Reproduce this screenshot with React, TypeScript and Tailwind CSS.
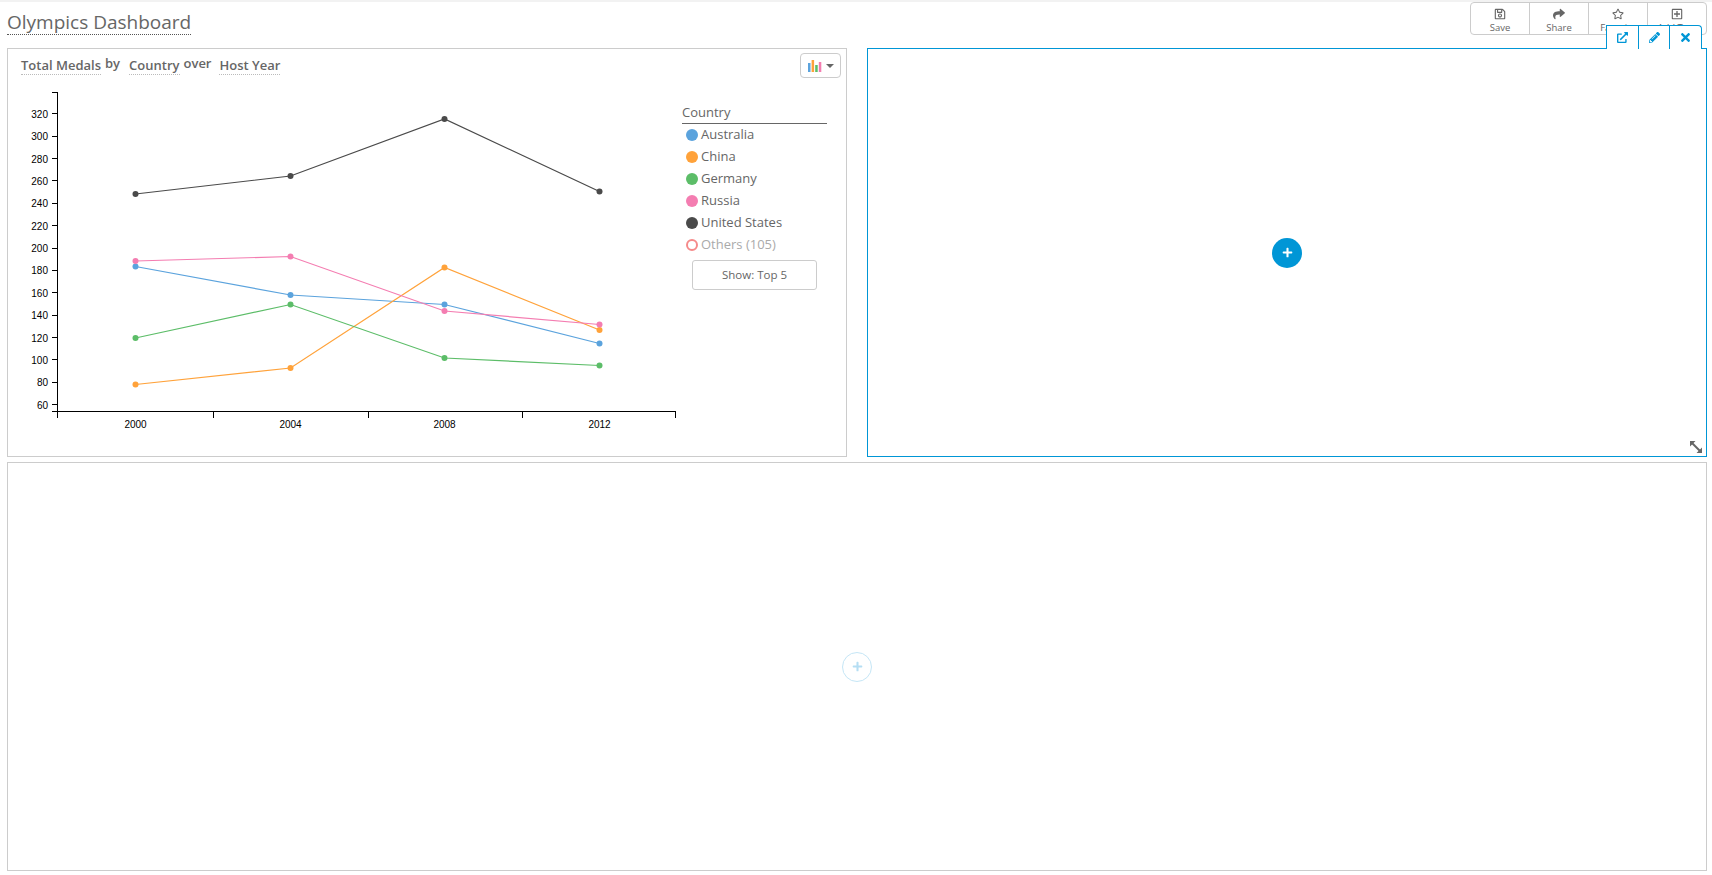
import { FaExternalLinkAlt, FaPencilAlt, FaPlus, FaRegPlusSquare, FaRegSave, FaRegStar, FaShare, FaTimes } from 'react-icons/fa'

const font = "font-['Open_Sans',sans-serif]"

const toolbar = [
  { label: 'Save', icon: FaRegSave },
  { label: 'Share', icon: FaShare },
  { label: 'Favorite', icon: FaRegStar },
  { label: 'Add Text', icon: FaRegPlusSquare },
]

const years = [
  { label: '2000', x: 135.5 },
  { label: '2004', x: 290.5 },
  { label: '2008', x: 444.5 },
  { label: '2012', x: 599.5 },
]

const series = [
  { name: 'Australia', color: '#5ba3dd', ys: [266.5, 295, 304.5, 343.5] },
  { name: 'China', color: '#ffa23a', ys: [384.5, 368, 267.5, 330] },
  { name: 'Germany', color: '#5cbd68', ys: [338, 304.5, 358, 365.5] },
  { name: 'Russia', color: '#f47db1', ys: [261, 256.5, 311, 324.5] },
  { name: 'United States', color: '#4a4a4a', ys: [194, 176, 119, 191.5] },
]

const yTicks = [320, 300, 280, 260, 240, 220, 200, 180, 160, 140, 120, 100, 80, 60]

function LineChart() {
  return (
    <svg width="680" height="360" viewBox="0 80 680 360" className="block shrink-0">
      <g stroke="#000" strokeWidth="1" fill="none" shapeRendering="crispEdges">
        <path d="M52 92.5H57.5V411.5M52 411.5H675.5" />
        {[57.5, 213.5, 368.5, 522.5, 675.5].map((x) => (
          <path key={x} d={`M${x} 411.5V418`} />
        ))}
        {yTicks.map((t) => (
          <path key={t} d={`M52 ${Math.round(113.3 + (320 - t) * 1.119) + 0.5}H57.5`} />
        ))}
      </g>
      <g fontFamily="'Liberation Sans', sans-serif" fontSize="10" fill="#000">
        {yTicks.map((t) => (
          <text key={t} x="48" y={113.3 + (320 - t) * 1.119 + 4.5} textAnchor="end">
            {t}
          </text>
        ))}
        {years.map((y) => (
          <text key={y.label} x={y.x} y="428" textAnchor="middle">
            {y.label}
          </text>
        ))}
      </g>
      {series.map((s) => (
        <g key={s.name}>
          <polyline
            points={s.ys.map((y, i) => `${years[i].x},${y}`).join(' ')}
            fill="none"
            stroke={s.color}
            strokeWidth="1.2"
          />
          {s.ys.map((y, i) => (
            <circle key={i} cx={years[i].x} cy={y} r="3" fill={s.color} />
          ))}
        </g>
      ))}
    </svg>
  )
}

function ChartIcon() {
  return (
    <svg width="14" height="12" viewBox="0 0 14 12">
      <rect x="0" y="3" width="2.5" height="9" fill="#5ba3dd" />
      <rect x="3.6" y="0" width="2.5" height="12" fill="#ffa23a" />
      <rect x="7.2" y="5" width="2.5" height="7" fill="#5cbd68" />
      <rect x="10.8" y="2" width="2.5" height="10" fill="#f47db1" />
    </svg>
  )
}

function Field({ children }: { children: string }) {
  return <span className="border-b border-dotted border-[#bbb] pb-0 leading-[18px] font-semibold">{children}</span>
}

function Legend() {
  return (
    <div className="w-[145px] ml-[2px] mt-[23px] text-[#666]">
      <div className="h-[21px] border-b border-[#666] text-[13px] leading-[19px]">Country</div>
      <ul className="pl-[4px] text-[13px]">
        {series.map((s) => (
          <li key={s.name} className="h-[22px] flex items-center gap-[3px]">
            <svg width="12" height="12" viewBox="0 0 12 12" className="shrink-0">
              <circle cx="6" cy="6" r="6" fill={s.color} />
            </svg>
            <span className="whitespace-nowrap">{s.name}</span>
          </li>
        ))}
        <li className="h-[22px] flex items-center gap-[3px] text-[#aaa]">
          <span className="w-3 h-3 rounded-full border-2 border-[#f58a8a] shrink-0" />
          <span className="whitespace-nowrap">Others (105)</span>
        </li>
      </ul>
      <button className="mt-[4px] ml-[10px] w-[125px] h-[30px] border border-[#ccc] rounded-[3px] bg-white text-[11.5px] text-[#666]">
        Show: Top 5
      </button>
    </div>
  )
}

function AddButton({ faded }: { faded?: boolean }) {
  return faded ? (
    <div className="w-[30px] h-[30px] rounded-full border border-[#c5e6f6] flex items-center justify-center text-[#b5def3]">
      <FaPlus size={11} />
    </div>
  ) : (
    <div className="w-[30px] h-[30px] rounded-full bg-[#0096d6] flex items-center justify-center text-white">
      <FaPlus size={11} />
    </div>
  )
}

export default function App() {
  return (
    <div className={`${font} w-[1712px] h-[875px] bg-white overflow-hidden border-t-2 border-[#f2f2f2] px-[7px] text-[#666]`}>
      {/* Header */}
      <header className="h-[46px] flex justify-between items-start">
        <h1 className="mt-[8px] text-[19px] leading-[24px] font-normal border-b border-dotted border-[#555]">Olympics Dashboard</h1>
        <div className="flex w-[237px] h-[33px] -mr-[2px] border border-[#ccc] rounded-[4px]">
          {toolbar.map(({ label, icon: Icon }, i) => (
            <div key={label} className={`flex-1 flex flex-col items-center pt-[5px] ${i ? 'border-l border-[#ccc]' : ''}`}>
              <Icon size={12} className="text-[#666]" />
              <span className="text-[9.5px] leading-[13px] mt-[1px] whitespace-nowrap">{label}</span>
            </div>
          ))}
        </div>
      </header>

      <div className="grid grid-cols-[840px_840px] gap-x-[20px] gap-y-[5px] grid-rows-[409px_409px] w-[1700px]">
        {/* Chart panel */}
        <section className="relative border border-[#ccc]">
          <div className="flex items-start h-[33px] pl-[13px] pt-[7px] text-[13px]">
            <Field>Total Medals</Field>
            <span className="ml-[4px] mr-[9px] -mt-[2px] font-semibold">by</span>
            <Field>Country</Field>
            <span className="ml-[4px] mr-[8px] -mt-[2px] font-semibold">over</span>
            <Field>Host Year</Field>
          </div>
          <div className="absolute right-[5px] top-[4px] w-[41px] h-[25px] border border-[#ccc] rounded-[4px] flex items-center justify-center gap-[4px] bg-white">
            <ChartIcon />
            <span className="w-0 h-0 border-x-[4px] border-x-transparent border-t-[4px] border-t-[#666]" />
          </div>
          <div className="flex -ml-[8px] -mt-[2px]">
            <LineChart />
            <Legend />
          </div>
        </section>

        {/* Empty selected panel */}
        <section className="relative border border-[#0096d6] flex items-center justify-center">
          <AddButton />
          <div className="absolute -top-[24px] right-[4px] flex h-[24px] w-[96px] bg-white border border-[#0096d6] border-b-0 rounded-tr-[4px] text-[#0096d6]">
            <div className="flex-1 flex items-center justify-center">
              <FaExternalLinkAlt size={11} />
            </div>
            <div className="flex-1 flex items-center justify-center border-l border-[#0096d6]">
              <FaPencilAlt size={11} />
            </div>
            <div className="flex-1 flex items-center justify-center border-l border-[#0096d6]">
              <FaTimes size={13} />
            </div>
          </div>
          <svg width="14" height="14" viewBox="0 0 14 14" className="absolute right-[3px] bottom-[2px]">
            <path d="M3 3L11 11" stroke="#666" strokeWidth="2" />
            <path d="M1 1H6.5L1 6.5ZM13 13H7.5L13 7.5Z" fill="#666" />
          </svg>
        </section>

        {/* Empty panel */}
        <section className="col-span-2 border border-[#ccc] flex items-center justify-center">
          <AddButton faded />
        </section>
      </div>
    </div>
  )
}
